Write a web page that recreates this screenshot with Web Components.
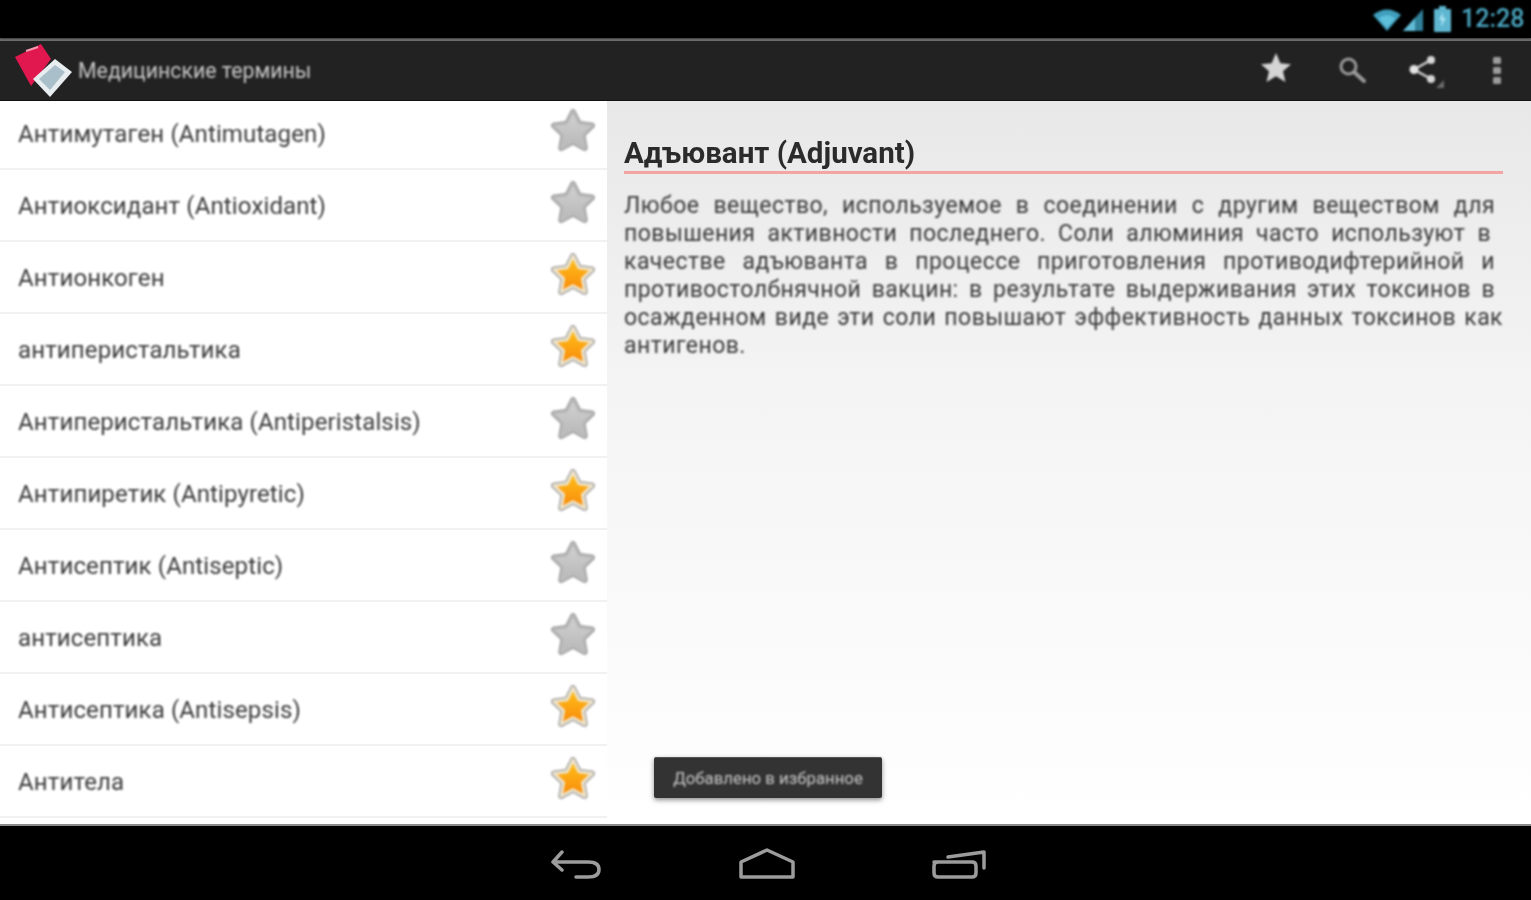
<!DOCTYPE html>
<html lang="ru">
<head>
<meta charset="utf-8">
<title>Медицинские термины</title>
<style>
  html, body { margin: 0; height: 100%; background: #000; overflow: hidden; }
  body { font-family: Roboto, "Liberation Sans", sans-serif; }
</style>
</head>
<body>
<app-shell>
  <status-bar slot="status" time="12:28"></status-bar>
  <action-bar slot="action" title-text="Медицинские термины"></action-bar>
  <term-list slot="list">
    <term-row>Антимутаген (Antimutagen)</term-row>
    <term-row>Антиоксидант (Antioxidant)</term-row>
    <term-row fav>Антионкоген</term-row>
    <term-row fav>антиперистальтика</term-row>
    <term-row>Антиперистальтика (Antiperistalsis)</term-row>
    <term-row fav>Антипиретик (Antipyretic)</term-row>
    <term-row>Антисептик (Antiseptic)</term-row>
    <term-row>антисептика</term-row>
    <term-row fav>Антисептика (Antisepsis)</term-row>
    <term-row fav>Антитела</term-row>
  </term-list>
  <term-detail slot="detail" heading="Адъювант (Adjuvant)">
    <span class="line" style="--r:8px">Любое вещество, используемое в соединении с другим веществом для</span>
    <span class="line" style="--r:12px">повышения активности последнего. Соли алюминия часто используют в</span>
    <span class="line" style="--r:8px">качестве адъюванта в процессе приготовления противодифтерийной и</span>
    <span class="line" style="--r:8px">противостолбнячной вакцин: в результате выдерживания этих токсинов в</span>
    <span class="line" style="--r:0px">осажденном виде эти соли повышают эффективность данных токсинов как</span>
    <span class="line last">антигенов.</span>
    <toast-msg slot="toast">Добавлено в избранное</toast-msg>
  </term-detail>
  <nav-bar slot="nav"></nav-bar>
</app-shell>

<script>
class AppShell extends HTMLElement {
  connectedCallback() {
    this.attachShadow({ mode: 'open' });
    this.shadowRoot.innerHTML = `
      <style>
        :host { display: flex; flex-direction: column; width: 1531px; height: 900px; }
        .main { flex: 1; display: flex; min-height: 0; border-bottom: 2px solid #8a8a8a; box-sizing: border-box; }
      </style>
      <slot name="status"></slot>
      <slot name="action"></slot>
      <div class="main">
        <slot name="list"></slot>
        <slot name="detail"></slot>
      </div>
      <slot name="nav"></slot>
    `;
  }
}

class StatusBar extends HTMLElement {
  connectedCallback() {
    this.attachShadow({ mode: 'open' });
    this.shadowRoot.innerHTML = `
      <style>
        :host { display: flex; align-items: center; justify-content: flex-end; height: 38px; background: #000; padding-right: 8px; color: #4aa6c0; filter: blur(1px); }
        svg { display: block; }
        .time { font: 500 25px/38px Roboto, sans-serif; margin-left: 10px; width: 62px; white-space: nowrap; }
      </style>
      <svg width="28" height="24" viewBox="0 0 28 24"><path d="M0 8Q14-3 28 8L14 24Z" fill="#3f9fbd"/><path d="M5.500 11.500Q14 5 22.500 11.500L14 21Z" fill="#5fc0dc"/></svg>
      <svg width="22" height="24" viewBox="0 0 22 24" style="margin-left:2px"><path d="M0 24L20 2V24Z" fill="#2f7f98"/><path d="M0 24L12 11V24Z" fill="#62bcd6"/></svg>
      <svg width="17" height="26" viewBox="0 0 17 26" style="margin-left:9px"><path d="M5 0H12V3H16Q17 3 17 4V25Q17 26 16 26H1Q0 26 0 25V4Q0 3 1 3H5Z" fill="#5eb6d0"/><path d="M9 6L5 14H8L7 21L12 12H9Z" fill="#a9e3f2"/></svg>
      <span class="time"></span>
    `;
    this.shadowRoot.querySelector('.time').textContent = this.getAttribute('time');
  }
}

class ActionBar extends HTMLElement {
  connectedCallback() {
    this.attachShadow({ mode: 'open' });
    this.shadowRoot.innerHTML = `
      <style>
        :host { display: flex; align-items: center; height: 63px; box-sizing: border-box; background: #222; border-top: 3px solid #6c6c6c; border-bottom: 1px solid #111; padding-left: 14px; }
        .logo { display: block; flex: none; filter: blur(.7px); }
        .title { margin-left: 4px; font: 400 21.300px/1 Roboto, sans-serif; color: #c8c8c8; white-space: nowrap; filter: blur(.9px); }
        .icons { margin-left: auto; display: flex; align-items: center; filter: blur(.8px); }
        svg { display: block; flex: none; }
      </style>
      <svg class="logo" width="60" height="56" viewBox="0 0 60 56">
        <path d="M1 14L27 1 37 16 17 43Z" fill="#e0184f"/>
        <path d="M12 8L24 4" stroke="#f59ab3" stroke-width="2"/>
        <path d="M19 36L41 16 58 29 36 54Z" fill="#e8eef0"/>
        <path d="M25 36L41 22 51 29 36 47Z" fill="#a9bfc9"/>
      </svg>
      <span class="title"></span>
      <div class="icons">
        <svg width="34" height="34" viewBox="0 0 34 34" style="margin-right:45px;margin-top:-6px"><path d="M17 2L21.400 12.300 32 13.200 24 20.200 26.500 31 17 25.300 7.500 31 10 20.200 2 13.200 12.600 12.300Z" fill="#d4d4d4"/></svg>
        <svg width="28" height="28" viewBox="0 0 28 28" fill="none" stroke="#9a9a9a" style="margin-right:43px;margin-top:-2px"><circle cx="10.500" cy="10.500" r="7.500" stroke-width="3"/><path d="M16 16L26 25" stroke-width="4" stroke-linecap="round"/></svg>
        <svg width="36" height="36" viewBox="0 0 36 36" style="margin-right:48px;margin-top:4px"><path d="M22 5L5 14.500 22 24" fill="none" stroke="#d0d0d0" stroke-width="2.500"/><circle cx="22" cy="5" r="4" fill="#d8d8d8"/><circle cx="5" cy="14.500" r="4.500" fill="#e4e4e4"/><circle cx="22" cy="24" r="4" fill="#d8d8d8"/><path d="M35 25V33H27Z" fill="#6a6a6a"/></svg>
        <svg width="8" height="28" viewBox="0 0 8 28" style="margin-right:30px"><rect x="0" y="0" width="8" height="7" rx="1.500" fill="#9c9c9c"/><rect x="0" y="10" width="8" height="7" rx="1.500" fill="#9c9c9c"/><rect x="0" y="20" width="8" height="7" rx="1.500" fill="#9c9c9c"/></svg>
      </div>
    `;
    this.shadowRoot.querySelector('.title').textContent = this.getAttribute('title-text');
  }
}

class TermList extends HTMLElement {
  connectedCallback() {
    this.attachShadow({ mode: 'open' });
    this.shadowRoot.innerHTML = `
      <style>
        :host { display: block; flex: none; width: 607px; background: #fff; overflow: hidden; }
        .scroll { margin-top: -3px; }
      </style>
      <div class="scroll"><slot></slot></div>
    `;
  }
}

class TermRow extends HTMLElement {
  connectedCallback() {
    const fav = this.hasAttribute('fav');
    const id = fav ? 'o' : 'g';
    const fill = fav
      ? '<stop offset="0" stop-color="#ffc21a"/><stop offset="1" stop-color="#f98a0c"/>'
      : '<stop offset="0" stop-color="#d2d2d2"/><stop offset="1" stop-color="#b8b8b8"/>';
    const star = 'M24 5L29.800 16.700 43 18.500 33.500 27.700 35.800 41 24 34.700 12.200 41 14.500 27.700 5 18.500 18.200 16.700Z';
    this.attachShadow({ mode: 'open' });
    this.shadowRoot.innerHTML = `
      <style>
        :host { display: flex; align-items: center; justify-content: space-between; height: 72px; box-sizing: border-box; border-bottom: 2px solid #f1f1f1; padding: 4px 10px 2px 18px; }
        .t { font: 400 24px/1 Roboto, sans-serif; letter-spacing: .13px; color: #3a3a3a; white-space: nowrap; filter: blur(.8px); }
        svg { display: block; flex: none; margin-top: -9px; filter: blur(.8px); }
      </style>
      <span class="t"><slot></slot></span>
      <svg width="48" height="46" viewBox="0 0 48 46" stroke-linejoin="round">
        <defs><linearGradient id="${id}" x1="0" y1="0" x2="0" y2="1">${fill}</linearGradient></defs>
        <path d="${star}" fill="#a8a8a8" stroke="#a8a8a8" stroke-width="6"/>
        <path d="${star}" fill="url(#${id})" stroke="${fav ? '#efe3c8' : '#bebebe'}" stroke-width="${fav ? 3 : 2}"/>
      </svg>
    `;
  }
}

class TermDetail extends HTMLElement {
  connectedCallback() {
    this.attachShadow({ mode: 'open' });
    this.shadowRoot.innerHTML = `
      <style>
        :host { display: block; position: relative; flex: 1; box-sizing: border-box; padding: 36px 28px 0 17px; background: linear-gradient(#e8e8e8, #f4f4f4 40%, #fff); color: #383838; }
        h1 { margin: 0 0 18px; padding-bottom: 2px; height: 37px; box-sizing: border-box; border-bottom: 3px solid #f2a5a3; font: 700 29.500px/32px Roboto, sans-serif; color: #2b2b2b; white-space: nowrap; filter: blur(.7px); }
        .body { font: 400 23px/28px Roboto, sans-serif; letter-spacing: .45px; filter: blur(.8px); }
        ::slotted(.line) { display: block; white-space: nowrap; text-align: justify; text-align-last: justify; margin-right: var(--r, 0); }
        ::slotted(.last) { text-align-last: left; }
      </style>
      <h1></h1>
      <div class="body"><slot></slot></div>
      <slot name="toast"></slot>
    `;
    this.shadowRoot.querySelector('h1').textContent = this.getAttribute('heading');
  }
}

class ToastMsg extends HTMLElement {
  connectedCallback() {
    this.attachShadow({ mode: 'open' });
    this.shadowRoot.innerHTML = `
      <style>
        :host { position: absolute; left: 47px; top: 656px; width: 228px; height: 41px; box-sizing: border-box; display: flex; align-items: center; justify-content: center; background: #333; border-top: 1px solid #555; border-radius: 2px; box-shadow: 0 2px 5px rgba(0,0,0,.45); color: #c8c8c8; font: 400 16.800px/1 Roboto, sans-serif; white-space: nowrap; }
        span { filter: blur(.8px); }
      </style>
      <span><slot></slot></span>
    `;
  }
}

class NavBar extends HTMLElement {
  connectedCallback() {
    this.attachShadow({ mode: 'open' });
    this.shadowRoot.innerHTML = `
      <style>
        :host { display: flex; justify-content: center; height: 74px; background: #000; }
        svg { display: block; margin-top: 22px; margin-left: 18px; filter: blur(.6px); }
      </style>
      <svg width="450" height="34" viewBox="0 0 450 34" fill="none" stroke="#9c9c9c" stroke-width="3.500" stroke-linejoin="round" stroke-linecap="round">
        <path d="M12 4L3 14 12 22M3 14H38Q49 14 49 21.500T38 29H26"/>
        <path d="M191 14L217 2 243 14V29H191Z"/>
        <path d="M384 14H422Q426 14 426 18V25Q426 29 422 29H388Q384 29 384 25V18Q384 14 388 14M398 9L434 4V20"/>
      </svg>
    `;
  }
}

customElements.define('app-shell', AppShell);
customElements.define('status-bar', StatusBar);
customElements.define('action-bar', ActionBar);
customElements.define('term-list', TermList);
customElements.define('term-row', TermRow);
customElements.define('term-detail', TermDetail);
customElements.define('toast-msg', ToastMsg);
customElements.define('nav-bar', NavBar);
</script>
</body>
</html>
